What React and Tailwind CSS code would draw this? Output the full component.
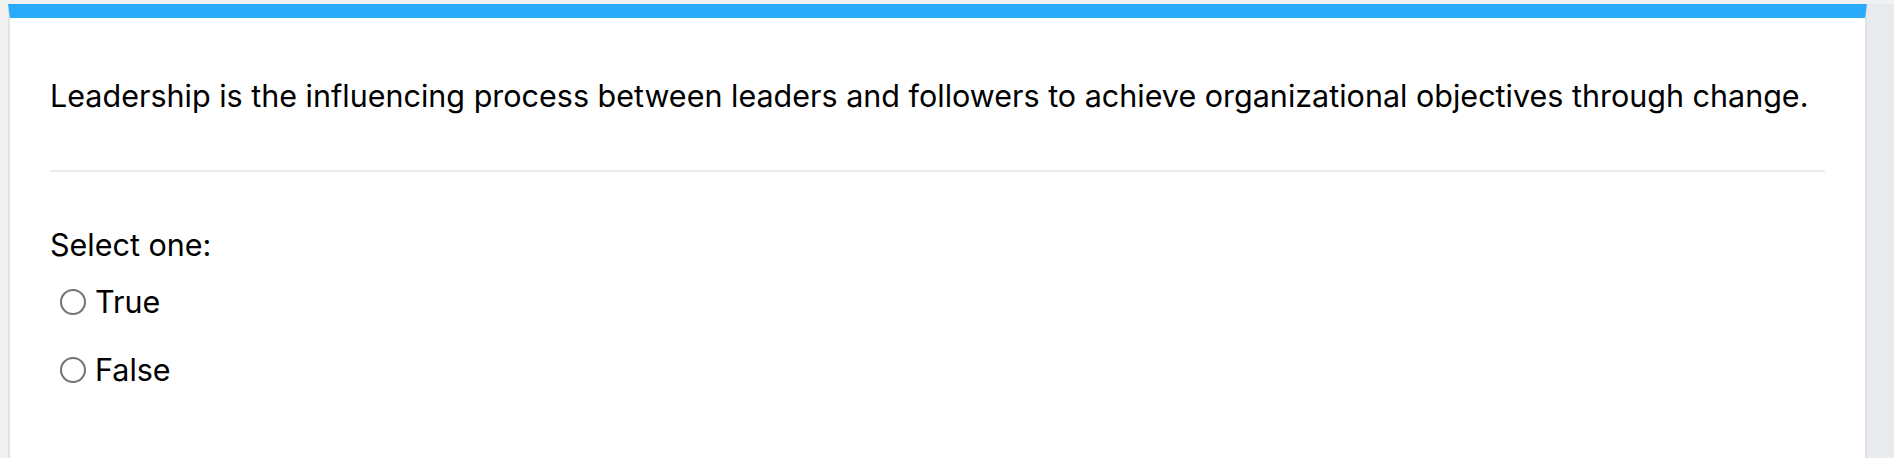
import React from 'react';

function Radio({ label }) {
  return (
    <label className="flex items-center gap-[9px] pl-[10px]">
      <span className="box-border h-[26px] w-[26px] shrink-0 rounded-full border-2 border-[#737373] bg-white" />
      <span>{label}</span>
    </label>
  );
}

export default function App() {
  return (
    <div
      className="flex h-[458px] w-full bg-[#f1f1f1] pt-[4px] text-[30.5px] text-black"
      style={{ fontFamily: 'Inter, "Noto Sans", sans-serif' }}
    >
      <div className="w-[8px] shrink-0" />
      <div className="box-border w-[1859px] shrink-0 border-t-[14px] border-r-2 border-l-2 border-t-[#2aaafb] border-r-[#dfe3e7] border-l-[#dfe3e7] bg-white px-[40px]">
        <p className="pt-[55px] leading-[45px]">
          Leadership is the influencing process between leaders and followers to achieve organizational objectives through change.
        </p>
        <hr className="mt-[52px] border-t-2 border-[#e9ecef]" />
        <p className="mt-[50px] leading-[45px]">Select one:</p>
        <div className="mt-[12px] flex flex-col gap-[23px] leading-[45px]">
          <Radio label="True" />
          <Radio label="False" />
        </div>
      </div>
      <div className="flex-1 bg-[#e8ebee]" />
    </div>
  );
}
